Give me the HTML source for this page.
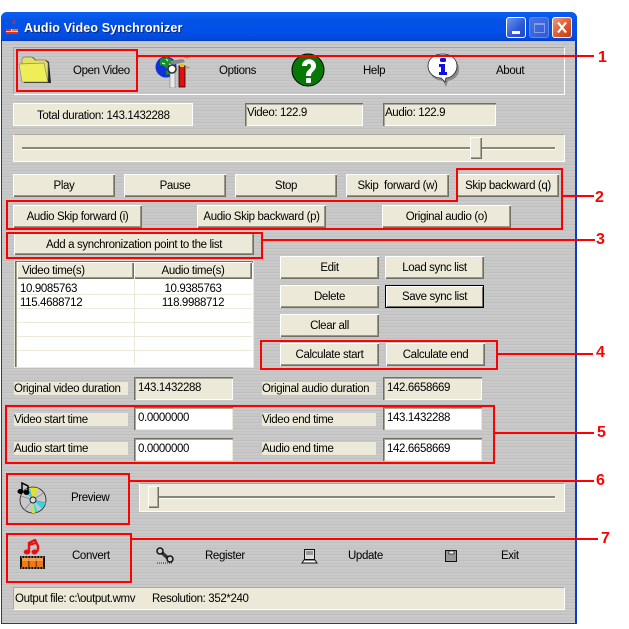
<!DOCTYPE html>
<html><head><meta charset="utf-8">
<style>
html,body{margin:0;padding:0;background:#fff;width:629px;height:629px;overflow:hidden}
body{position:relative;font-family:"Liberation Sans",sans-serif;font-size:11.5px;letter-spacing:-.37px;color:#000}
div,span,svg{position:absolute;box-sizing:border-box}
#win{left:1px;top:12px;width:576px;height:612px;background:#0a3cc8;border-radius:6px 6px 0 0}
#title{left:1px;top:12px;width:576px;height:29px;border-radius:6px 6px 0 0;background:linear-gradient(#0b5fe6 0,#0a5cf0 3px,#0453e6 8px,#0050ea 20px,#0448d6 27px,#0340c0 29px)}
#client{left:2px;top:41px;width:573px;height:582px;background-color:#c6c6c6;background-image:repeating-linear-gradient(0deg,#cacaca 0,#cacaca 2px,#bfbfbf 2px,#bfbfbf 3px,#c8c8c8 3px,#c8c8c8 5px,#c3c3c3 5px,#c3c3c3 6px)}
.t{white-space:nowrap;line-height:14px;height:14px}
.c{text-align:center}
.b{background:#ece9d8;box-shadow:inset 1px 1px 0 #fff,inset -1px -1px 0 #716f64,inset -2px -2px 0 #9a9688;text-align:center;white-space:nowrap;line-height:24px}
.p{background:#ece9d8;border-top:1px solid #aca899;border-left:1px solid #aca899;border-right:1px solid #fff;border-bottom:1px solid #fff;white-space:nowrap}
.s{background:#ece9d8;box-shadow:inset 1px 1px 0 #716f64,inset 2px 2px 0 #aca899,inset -1px -1px 0 #fff;white-space:nowrap;padding:5px 0 0 4px;line-height:13px}
.i{background:#fff;box-shadow:inset 1px 1px 0 #716f64,inset 2px 2px 0 #aca899,inset -1px -1px 0 #ece9d8;white-space:nowrap;padding:5px 0 0 4px;line-height:13px}
.l{background:#ece9d8;white-space:nowrap;line-height:15px;height:13px}
.r{background:#f00;z-index:5}
.n{color:#f00;font-size:16px;font-weight:bold;line-height:18px;letter-spacing:0;z-index:5;font-family:"Liberation Sans",sans-serif}
.tk{box-shadow:inset 1px 1px 0 #fff,inset -1px -1px 0 #716f64,inset -2px -2px 0 #aca899;background:#ece9d8;z-index:2}
</style></head><body>
<div id="win"></div>
<div id="title"></div>
<div id="client"></div>

<svg style="left:5px;top:19px" width="14" height="16" viewBox="0 0 14 16"><path d="M7 3l3 2M9 1l1 2" stroke="#d33" fill="none"/><rect x="1" y="10" width="12" height="5" fill="#e8e4d8"/><rect x="1" y="10" width="5" height="2" fill="#e03010"/><rect x="7" y="10" width="6" height="2" fill="#f07020"/><rect x="1" y="13" width="12" height="2" fill="#e03010"/></svg>
<div class="t" style="left:24px;top:21px;color:#fff;font-weight:bold;font-size:12.5px;letter-spacing:.13px;text-shadow:1px 1px 0 #0a2a80">Audio Video Synchronizer</div>

<!-- window buttons -->
<div style="left:506px;top:17px;width:20px;height:21px;border:1px solid #fff;border-radius:3px;background:linear-gradient(135deg,#6f96ee,#2a56d8 60%,#1f48c8)"></div>
<div style="left:512px;top:31px;width:8px;height:3px;background:#fff"></div>
<div style="left:529px;top:17px;width:20px;height:21px;border:1px solid #5f8ae8;border-radius:3px;background:linear-gradient(135deg,#4a72e0,#2f5ad8)"></div>
<div style="left:534px;top:23px;width:11px;height:10px;border:1px solid #7fa0e8;border-top-width:2px"></div>
<div style="left:552px;top:17px;width:20px;height:21px;border:1px solid #fff;border-radius:3px;background:linear-gradient(135deg,#ec9a80,#dc5a30 55%,#c03c18)"></div>
<svg style="left:552px;top:17px" width="20" height="21"><path d="M6 5.500l8 10M14 5.500l-8 10" stroke="#fff" stroke-width="2.200"/></svg>

<!-- toolbar panel -->
<div style="left:13px;top:47px;width:552px;height:48px;border:1px solid #fff;border-top-color:#a8a498;border-left-color:#a8a498"></div>

<svg style="left:18px;top:55px" width="34" height="30" viewBox="0 0 34 30"><path d="M5 4l2-2h8l3 3h10l3 2 2 21H6z" fill="#222"/><path d="M4 4l2-2h8l3 3h10l3 3v16H4z" fill="#e6e060" stroke="#777" stroke-width=".7"/><path d="M1 9l25-1 4 19H4z" fill="#f0ee58" stroke="#888" stroke-width=".7"/></svg>
<div class="t" style="left:73px;top:64px">Open Video</div>

<svg style="left:154px;top:54px" width="36" height="34" viewBox="0 0 36 34"><circle cx="12" cy="13" r="10.500" fill="#1030d8"/><path d="M6 5l7-2 7 4-2 5-5 3-3-3-4-1z" fill="#189030"/><path d="M12 17l4-2v5l-4 1z" fill="#189030"/><path d="M12 5l2 2M8 9l3 1M15 10l3 1" stroke="#fff" stroke-width="1"/><path d="M16 7l13-2 2 3-13 3z" fill="#888"/><rect x="16" y="14" width="5" height="20" fill="#e8e8e8" stroke="#666" stroke-width=".5"/><circle cx="18" cy="15" r="4" fill="#fff" stroke="#333" stroke-width="1.600"/><rect x="25" y="12" width="6" height="21" fill="#e01010" stroke="#200" stroke-width=".8"/><rect x="26" y="10" width="4" height="3" fill="#e8c020"/><path d="M33 2v3M33 12v3M30 3.500h6M31 13.500h5" stroke="#c0a000" stroke-width="1"/></svg>
<div class="t" style="left:219px;top:64px">Options</div>

<svg style="left:291px;top:53px" width="35" height="34" viewBox="0 0 35 34"><circle cx="17" cy="17" r="16" fill="#067806" stroke="#000" stroke-width="1"/><path d="M11 13c0-9 14-9 14 0 0 5-5 5-5 10h-5c0-7 5-6 5-10 0-3-4-3-4 0z" fill="#fff"/><rect x="15" y="25" width="5" height="5" fill="#fff" rx="1"/></svg>
<div class="t" style="left:363px;top:64px">Help</div>

<svg style="left:427px;top:53px" width="34" height="34" viewBox="0 0 34 34"><path d="M17 3c8 0 15 5 15 13s-6 11-11 12l-2 6-3-6C8 27 3 24 3 16 3 8 9 3 17 3z" fill="#8a8a8a"/><path d="M15.500 1C24 1 30 6 30 13s-6 12-11 12l-1 4-4-4C7 25 1 20 1 13 1 6 7 1 15.500 1z" fill="#fff" stroke="#222" stroke-width=".8"/><rect x="13" y="5" width="6" height="4" fill="#1010e0" rx="1.500"/><path d="M12 11h6v8h2v3h-8v-3h2v-5h-2z" fill="#1010e0"/></svg>
<div class="t" style="left:496px;top:64px">About</div>

<!-- status row -->
<div class="p" style="left:13px;top:103px;width:180px;height:23px;border-top-color:#fff;border-left-color:#fff"></div>
<div class="t" style="left:37px;top:109px">Total duration: 143.1432288</div>
<div class="s" style="left:245px;top:103px;width:118px;height:23px;padding-left:2px;padding-top:4px">Video: 122.9</div>
<div class="s" style="left:383px;top:103px;width:113px;height:23px;padding-left:2px;padding-top:4px">Audio: 122.9</div>

<!-- slider 1 -->
<div class="p" style="left:13px;top:134px;width:552px;height:28px;border-left-color:#fff"></div>
<div style="left:22px;top:148px;width:534px;height:2px;background:#fff"></div>
<div style="left:22px;top:147px;width:533px;height:2px;background:#8a8778"></div>
<div class="tk" style="left:470px;top:137px;width:12px;height:22px"></div>

<!-- buttons -->
<div class="b" style="left:13px;top:174px;width:102px;height:23px">Play</div>
<div class="b" style="left:124px;top:174px;width:102px;height:23px">Pause</div>
<div class="b" style="left:235px;top:174px;width:102px;height:23px">Stop</div>
<div class="b" style="left:346px;top:174px;width:103px;height:23px">Skip&nbsp; forward (w)</div>
<div class="b" style="left:457px;top:174px;width:102px;height:23px">Skip backward (q)</div>
<div class="b" style="left:13px;top:205px;width:129px;height:23px">Audio Skip forward (i)</div>
<div class="b" style="left:197px;top:205px;width:129px;height:23px">Audio Skip backward (p)</div>
<div class="b" style="left:382px;top:205px;width:129px;height:23px">Original audio (o)</div>
<div class="b" style="left:14px;top:233px;width:240px;height:22px">Add a synchronization point to the list</div>

<!-- list -->
<div style="left:15px;top:261px;width:238px;height:106px;background:#fff;box-shadow:inset 1px 1px 0 #716f64,inset 2px 2px 0 #aca899;outline:1px solid #ece9d8;outline-offset:0"></div>
<div class="b" style="left:17px;top:262px;width:117px;height:17px;line-height:18px;text-align:left;padding-left:5px">Video time(s)</div>
<div class="b" style="left:134px;top:262px;width:118px;height:17px;line-height:18px">Audio time(s)</div>
<div style="left:17px;top:294px;width:235px;height:1px;background:#ece9d8"></div>
<div style="left:17px;top:308px;width:235px;height:1px;background:#ece9d8"></div>
<div style="left:17px;top:322px;width:235px;height:1px;background:#ece9d8"></div>
<div style="left:17px;top:336px;width:235px;height:1px;background:#ece9d8"></div>
<div style="left:17px;top:350px;width:235px;height:1px;background:#ece9d8"></div>
<div style="left:134px;top:279px;width:1px;height:86px;background:#ece9d8"></div>
<div class="t" style="left:20px;top:282px">10.9085763</div>
<div class="t c" style="left:134px;top:282px;width:118px">10.9385763</div>
<div class="t" style="left:20px;top:296px">115.4688712</div>
<div class="t c" style="left:134px;top:296px;width:118px">118.9988712</div>

<!-- right buttons -->
<div class="b" style="left:280px;top:256px;width:99px;height:23px">Edit</div>
<div class="b" style="left:385px;top:256px;width:99px;height:23px">Load sync list</div>
<div class="b" style="left:280px;top:285px;width:99px;height:23px">Delete</div>
<div class="b" style="left:385px;top:285px;width:99px;height:23px;box-shadow:inset 0 0 0 1px #000,inset 2px 2px 0 #fff,inset -2px -2px 0 #716f64">Save sync list</div>
<div class="b" style="left:280px;top:314px;width:99px;height:23px">Clear all</div>
<div class="b" style="left:280px;top:343px;width:99px;height:23px">Calculate start</div>
<div class="b" style="left:386px;top:343px;width:99px;height:23px">Calculate end</div>

<!-- durations -->
<div class="l" style="left:14px;top:382px;width:114px">Original video duration</div>
<div class="s" style="left:134px;top:377px;width:99px;height:23px">143.1432288</div>
<div class="l" style="left:262px;top:382px;width:114px">Original audio duration</div>
<div class="s" style="left:383px;top:377px;width:99px;height:23px">142.6658669</div>

<div class="l" style="left:14px;top:413px;width:114px">Video start time</div>
<div class="i" style="left:134px;top:407px;width:99px;height:23px">0.0000000</div>
<div class="l" style="left:262px;top:413px;width:114px">Video end time</div>
<div class="i" style="left:383px;top:407px;width:99px;height:23px">143.1432288</div>
<div class="l" style="left:14px;top:442px;width:114px">Audio start time</div>
<div class="i" style="left:134px;top:438px;width:99px;height:23px">0.0000000</div>
<div class="l" style="left:262px;top:442px;width:114px">Audio end time</div>
<div class="i" style="left:383px;top:438px;width:99px;height:23px">142.6658669</div>

<!-- preview -->
<svg style="left:16px;top:481px" width="32" height="34" viewBox="0 0 32 34"><circle cx="17" cy="19" r="13" fill="#c8c8c8" stroke="#222" stroke-width=".8"/><path d="M17 19L14 6.500 22 7z" fill="#e8e020"/><path d="M17 19L8 10l6-3z" fill="#40d0e0"/><path d="M17 19l9 9 4-6z M17 19l-1 13 6-1z" fill="#30d8e8"/><path d="M17 19l-1 13 3 0z" fill="#e0e030"/><path d="M17 19L5 15M17 19l12-8M17 19l-9 10M17 19L30 22" stroke="#888" stroke-width=".8"/><circle cx="17" cy="19" r="3" fill="#ddd" stroke="#222" stroke-width="1"/><path d="M6 10V2l6 3v5" fill="none" stroke="#000" stroke-width="1.500"/><ellipse cx="4.500" cy="10.500" rx="3" ry="2.500" fill="#000"/><ellipse cx="10.500" cy="11.500" rx="3" ry="2.500" fill="#000"/></svg>
<div class="t" style="left:71px;top:491px">Preview</div>
<div class="p" style="left:139px;top:483px;width:426px;height:29px;border-left-color:#fff"></div>
<div style="left:148px;top:497px;width:408px;height:2px;background:#fff"></div>
<div style="left:148px;top:496px;width:407px;height:2px;background:#8a8778"></div>
<div class="tk" style="left:148px;top:486px;width:11px;height:22px"></div>

<!-- convert row -->
<svg style="left:19px;top:539px" width="28" height="31" viewBox="0 0 28 31"><path d="M10 13V4l6-3 2 4c2 3 1 5 0 8" fill="none" stroke="#e81010" stroke-width="2.400"/><path d="M10 6l7-2" stroke="#e81010" stroke-width="2"/><ellipse cx="8" cy="13" rx="3.300" ry="2.500" fill="#e81010"/><ellipse cx="15.500" cy="13" rx="3" ry="2.500" fill="#e81010"/><rect x="1" y="17" width="25" height="13" fill="#111"/><rect x="3" y="19" width="6.500" height="9" fill="#f07818"/><rect x="10.300" y="19" width="6.500" height="9" fill="#f07818"/><rect x="17.500" y="19" width="6.500" height="9" fill="#f07818"/><rect x="3" y="19" width="21" height="3" fill="#f8a850" opacity=".8"/><path d="M2 18h24M2 29h24" stroke="#fff" stroke-width=".7" stroke-dasharray="1.500 1.500"/></svg>
<div class="t" style="left:72px;top:549px">Convert</div>
<svg style="left:156px;top:547px" width="20" height="18" viewBox="0 0 20 18"><path d="M4 4l10 9" stroke="#333" stroke-width="3.500"/><circle cx="4" cy="4" r="3" fill="#ccc" stroke="#111" stroke-width="1.500"/><circle cx="14" cy="12" r="3" fill="#ccc" stroke="#111" stroke-width="1.500"/><path d="M1 16h16" stroke="#222" stroke-dasharray="1 1"/></svg>
<div class="t" style="left:205px;top:549px">Register</div>
<svg style="left:301px;top:548px" width="18" height="16" viewBox="0 0 18 16"><rect x="3.500" y="1.500" width="10" height="10" fill="#ddd" stroke="#111"/><rect x="5" y="3" width="7" height="4" fill="#999"/><path d="M1 15l2-3h11l2 3z" fill="#fff" stroke="#111"/></svg>
<div class="t" style="left:348px;top:549px">Update</div>
<svg style="left:444px;top:549px" width="14" height="14" viewBox="0 0 14 14"><rect x="1.500" y="1.500" width="11" height="11" fill="#999" stroke="#111"/><rect x="5" y="2" width="5" height="3" fill="#fff" stroke="#111" stroke-width=".7"/></svg>
<div class="t" style="left:501px;top:549px">Exit</div>

<div class="p" style="left:13px;top:587px;width:552px;height:23px"></div>
<div class="t" style="left:15px;top:592px">Output file: c:\output.wmv</div>
<div class="t" style="left:152px;top:592px">Resolution: 352*240</div>

<!-- red annotations -->
<div style="left:16px;top:49px;width:122px;height:43px;border:2px solid #f00;z-index:5"></div>
<div class="r" style="left:137px;top:55px;width:457px;height:2px"></div>
<div class="n" style="left:598px;top:49px">1</div>

<svg style="left:5px;top:167px;z-index:5" width="560" height="64"><path d="M2 34H452V2H557V62H2z" fill="none" stroke="#f00" stroke-width="2"/></svg>
<div class="r" style="left:562px;top:195px;width:32px;height:2px"></div>
<div class="n" style="left:595px;top:189px">2</div>

<div style="left:6px;top:232px;width:257px;height:27px;border:2px solid #f00;z-index:5"></div>
<div class="r" style="left:262px;top:239px;width:333px;height:2px"></div>
<div class="n" style="left:596px;top:231px">3</div>

<div style="left:260px;top:340px;width:238px;height:30px;border:2px solid #f00;z-index:5"></div>
<div class="r" style="left:497px;top:353px;width:96px;height:2px"></div>
<div class="n" style="left:596px;top:344px">4</div>

<div style="left:5px;top:405px;width:490px;height:59px;border:2px solid #f00;z-index:5"></div>
<div class="r" style="left:494px;top:432px;width:100px;height:2px"></div>
<div class="n" style="left:597px;top:424px">5</div>

<div style="left:6px;top:473px;width:124px;height:52px;border:2px solid #f00;z-index:5"></div>
<div class="r" style="left:129px;top:480px;width:465px;height:2px"></div>
<div class="n" style="left:596px;top:472px">6</div>

<div style="left:6px;top:533px;width:126px;height:50px;border:2px solid #f00;z-index:5"></div>
<div class="r" style="left:131px;top:538px;width:467px;height:2px"></div>
<div class="n" style="left:601px;top:530px">7</div>
</body></html>
